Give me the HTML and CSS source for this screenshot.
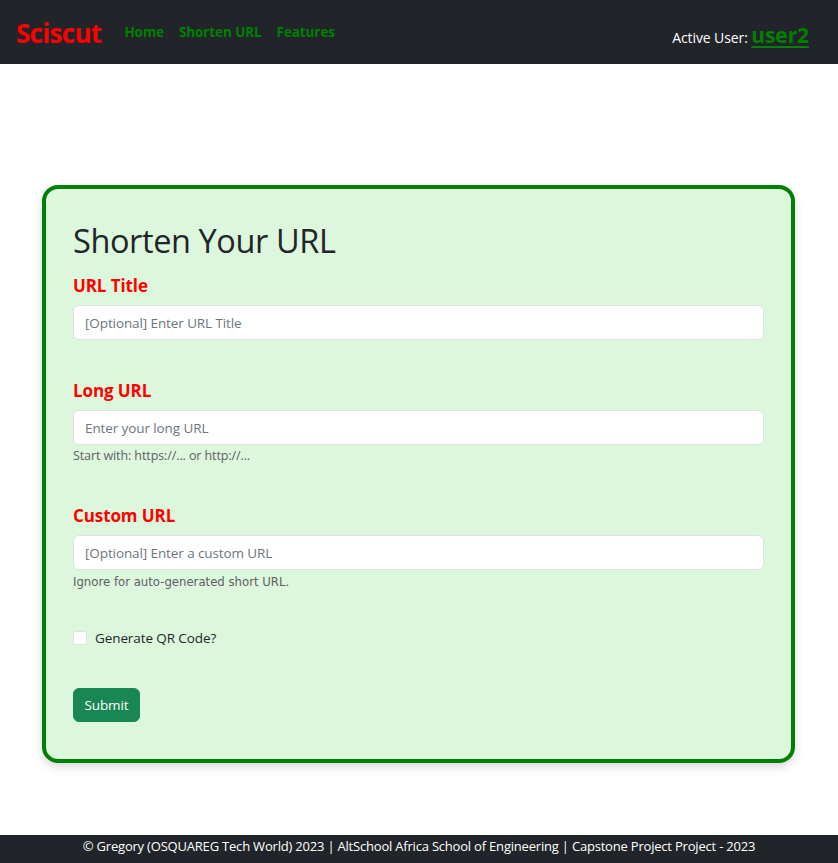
FILE: index.html
```html
<!DOCTYPE html>
<html lang="en">
<head>
<meta charset="utf-8">
<title>Sciscut</title>
<link rel="stylesheet" href="styles.css">
</head>
<body>
<header class="navbar">
  <div class="nav-left">
    <a class="brand" href="#">Sciscut</a>
    <nav class="nav-links">
      <a href="#">Home</a>
      <a href="#">Shorten URL</a>
      <a href="#">Features</a>
    </nav>
  </div>
  <div class="nav-user">Active User: <a class="user-link" href="#">user2</a></div>
</header>

<main class="main">
  <form class="card">
    <h2 class="card-title">Shorten Your URL</h2>

    <div class="group">
      <label class="label" for="title">URL Title</label>
      <input class="input" id="title" type="text" placeholder="[Optional] Enter URL Title">
    </div>

    <div class="group">
      <label class="label" for="long">Long URL</label>
      <input class="input" id="long" type="text" placeholder="Enter your long URL">
      <div class="help">Start with: https://... or http://...</div>
    </div>

    <div class="group">
      <label class="label" for="custom">Custom URL</label>
      <input class="input" id="custom" type="text" placeholder="[Optional] Enter a custom URL">
      <div class="help help-alt">Ignore for auto-generated short URL.</div>
    </div>

    <div class="check-row">
      <input class="check" id="qr" type="checkbox">
      <label class="check-label" for="qr">Generate QR Code?</label>
    </div>

    <button class="btn" type="button">Submit</button>
  </form>
</main>

<footer class="footer">© Gregory (OSQUAREG Tech World) 2023 | AltSchool Africa School of Engineering | Capstone Project Project - 2023</footer>
</body>
</html>
```

FILE: styles.css
```css
* { box-sizing: border-box; }

html, body {
  margin: 0;
  padding: 0;
}

body {
  font-family: "Open Sans", "Noto Sans", "Liberation Sans", sans-serif;
  color: #212529;
  background: #ffffff;
  min-height: 863px;
  display: flex;
  flex-direction: column;
}

a { text-decoration: none; }

.navbar {
  height: 64px;
  flex-shrink: 0;
  background: #212529;
  display: flex;
  align-items: center;
  justify-content: space-between;
  padding: 0 29px 0 16px;
}

.nav-left {
  display: flex;
  align-items: center;
  gap: 23px;
}

.brand {
  color: #ff0000;
  font-weight: 700;
  font-size: 26px;
  letter-spacing: -0.7px;
  margin-top: 2px;
}

.nav-links {
  display: flex;
  gap: 15px;
}

.nav-links a {
  color: #008000;
  font-weight: 700;
  font-size: 13.5px;
  letter-spacing: -0.1px;
}

.nav-user {
  color: #ffffff;
  font-size: 14px;
  margin-top: 5px;
  letter-spacing: -0.1px;
}

.user-link {
  color: #008000;
  font-weight: 700;
  font-size: 21px;
  text-decoration: underline;
  text-decoration-thickness: 2px;
  text-underline-offset: 3px;
}

.main {
  flex: 1;
  padding: 121px 43px 72px 42px;
  display: flex;
  flex-direction: column;
}

.card {
  width: 100%;
  background: #dcf7dc;
  border: 4px solid #008000;
  border-radius: 16px;
  box-shadow: 0 4px 10px rgba(0, 0, 0, 0.15);
  padding: 34px 27px 37px;
  display: flex;
  flex-direction: column;
}

.card-title {
  margin: -2px 0 12px;
  font-size: 32.5px;
  font-weight: 400;
  line-height: 40px;
  letter-spacing: -0.4px;
}

.group {
  display: flex;
  flex-direction: column;
  margin-bottom: 38px;
}

.label {
  color: #ff0000;
  font-weight: 700;
  font-size: 17px;
  line-height: 26px;
  margin-bottom: 6px;
  letter-spacing: -0.1px;
}

.input {
  height: 35px;
  width: 100%;
  font: inherit;
  font-size: 13.5px;
  padding: 6px 11px;
  color: #212529;
  background: #ffffff;
  border: 1px solid #dee2e6;
  border-radius: 6px;
  outline: none;
  letter-spacing: -0.1px;
}

.input::placeholder {
  color: #6c757d;
  opacity: 1;
}

.help {
  margin-top: 1px;
  font-size: 12.5px;
  line-height: 19px;
  color: #5d6166;
  letter-spacing: -0.1px;
}

.help-alt {
  margin-top: 3px;
  font-family: "DejaVu Sans", "Noto Sans", sans-serif;
  font-size: 11.7px;
  letter-spacing: 0;
}

.check-row {
  display: flex;
  align-items: center;
  gap: 8px;
  margin-top: -2px;
  margin-bottom: 40px;
}

.check {
  appearance: none;
  -webkit-appearance: none;
  width: 14px;
  height: 14px;
  margin: 0;
  background: #ffffff;
  border: 1px solid #dee2e6;
  border-radius: 3px;
}

.check-label {
  font-size: 13.5px;
  line-height: 20px;
  letter-spacing: -0.1px;
}

.btn {
  align-self: flex-start;
  width: 67px;
  height: 34px;
  font: inherit;
  font-size: 13.5px;
  color: #ffffff;
  background: #198754;
  border: 1px solid #198754;
  border-radius: 6px;
  padding: 0;
  letter-spacing: -0.1px;
}

.footer {
  height: 28px;
  flex-shrink: 0;
  background: #212529;
  color: #ffffff;
  font-size: 13px;
  line-height: 22px;
  text-align: center;
  letter-spacing: -0.2px;
}
```
